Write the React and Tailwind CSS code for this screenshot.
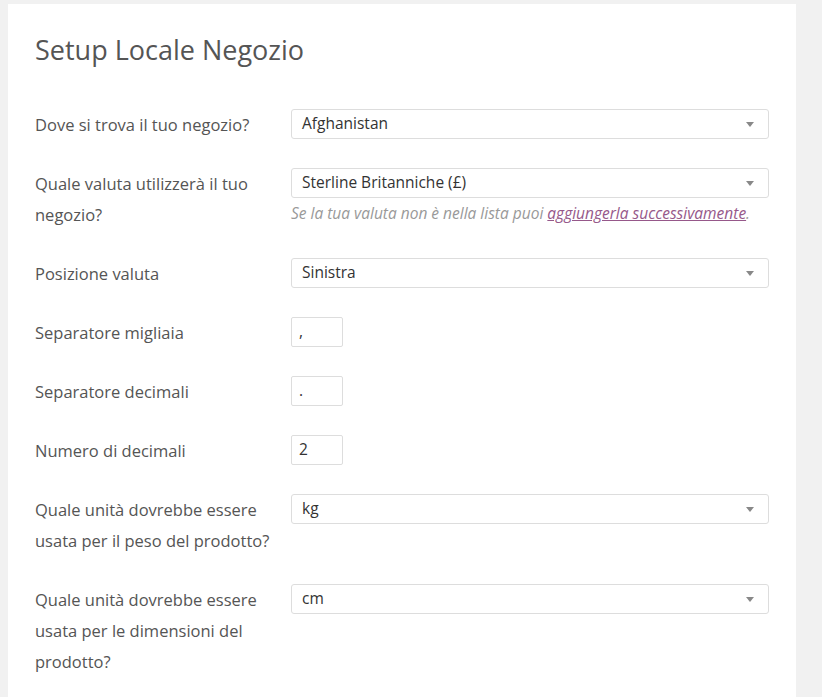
const F = { fontFamily: '"Open Sans", "Liberation Sans", sans-serif' };

function Select({ value }) {
  return (
    <div className="flex h-[30px] w-[478px] items-center justify-between rounded-[3px] border border-[#ddd] bg-white pl-[10px] pr-[14px] text-[15.5px] text-[#333]">
      <span>{value}</span>
      <span className="h-0 w-0 border-x-[4px] border-t-[5px] border-x-transparent border-t-[#888]" />
    </div>
  );
}

function Small({ value }) {
  return (
    <div className="flex h-[30px] w-[52px] items-center rounded-[2px] border border-[#ddd] bg-white px-[7px] text-[15.5px] text-[#333]">
      {value}
    </div>
  );
}

function Row({ label, children }) {
  return (
    <div className="flex items-start py-[14px]">
      <div className="w-[256px] pr-[14px] text-[16.5px] leading-[31px] text-[#555]">{label}</div>
      <div>{children}</div>
    </div>
  );
}

export default function App() {
  return (
    <div className="min-h-[697px] bg-[#f1f1f1] pl-[8px] pt-[4px]" style={F}>
      <div className="min-h-[693px] w-[788px] bg-white pl-[27px] pt-[26px]">
        <h1 className="mb-[25px] text-[27px] leading-[40px] text-[#555]">Setup Locale Negozio</h1>
        <Row label="Dove si trova il tuo negozio?"><Select value="Afghanistan" /></Row>
        <Row label="Quale valuta utilizzerà il tuo negozio?">
          <Select value="Sterline Britanniche (£)" />
          <p className="mt-[3px] text-[15.5px] italic leading-[24px] text-[#999]">
            Se la tua valuta non è nella lista puoi{" "}
            <span className="text-[#96588a] underline">aggiungerla successivamente</span>.
          </p>
        </Row>
        <Row label="Posizione valuta"><Select value="Sinistra" /></Row>
        <Row label="Separatore migliaia"><Small value="," /></Row>
        <Row label="Separatore decimali"><Small value="." /></Row>
        <Row label="Numero di decimali"><Small value="2" /></Row>
        <Row label="Quale unità dovrebbe essere usata per il peso del prodotto?"><Select value="kg" /></Row>
        <Row label="Quale unità dovrebbe essere usata per le dimensioni del prodotto?"><Select value="cm" /></Row>
      </div>
    </div>
  );
}
